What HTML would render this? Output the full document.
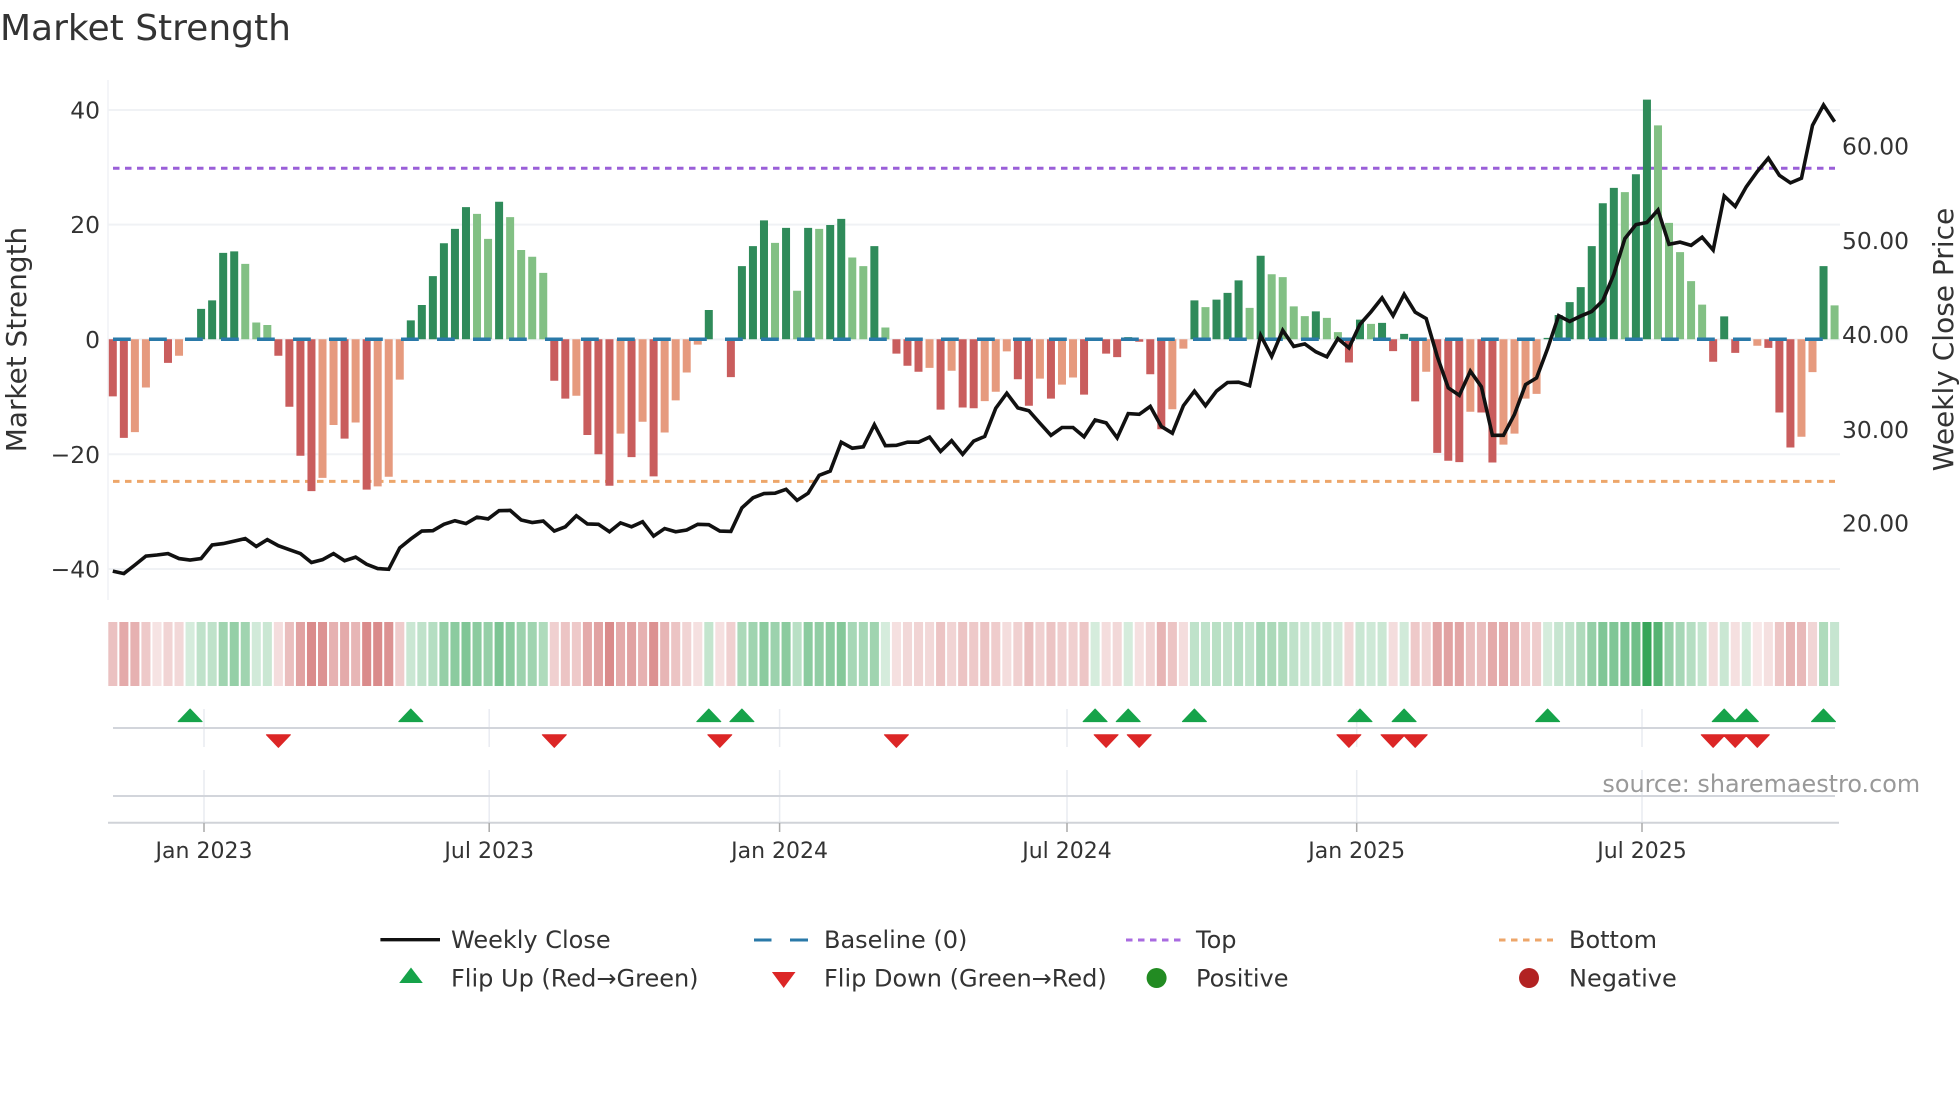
<!DOCTYPE html>
<html lang="en"><head><meta charset="utf-8"><title>Market Strength</title>
<style>
html,body{margin:0;padding:0;background:#fff}
svg{display:block}
text{font-family:"DejaVu Sans","Liberation Sans",sans-serif;fill:#333}
.t{font-size:23.4px}.x{font-size:22px}.l{font-size:24px}
.nz{vector-effect:non-scaling-stroke;fill:none}
#r rect,#g rect{width:.82px;height:1px}
#r rect{fill:rgb(205,100,100)}#g rect{fill:rgb(44,160,80)}
</style></head><body>
<svg width="1960" height="1102" viewBox="0 0 1960 1102" xmlns="http://www.w3.org/2000/svg">
<rect width="1960" height="1102" fill="#fff"/>
<text x="0" y="40" style="font-size:36px">Market Strength</text>
<path d="M108 80V600" stroke="#f0f2f5" stroke-width="1.5"/>
<path d="M108 110H1840M108 224.6H1840M108 339.4H1840M108 454.3H1840M108 569H1840" stroke="#f0f2f5" stroke-width="2"/>
<path d="M113 168.2H1835" stroke="#9a5fd8" stroke-width="3" stroke-dasharray="6.5 5.5"/>
<path d="M113 481.4H1835" stroke="#eda66a" stroke-width="3" stroke-dasharray="6.5 5.5"/>
<g transform="translate(112.8,60) scale(11.037,0.357143)">
<path class="nz" stroke="#c95d5d" stroke-width="8" d="M0 782V942M1 782V1058M5 782V848M15 782V828M16 782V971M17 782V1108M18 782V1207M21 782V1060M23 782V1203M40 782V898M41 782V948M43 782V1050M44 782V1104M45 782V1192M47 782V1112M49 782V1166M56 782V888M71 782V822M72 782V856M73 782V873M75 782V979M77 782V973M78 782V975M82 782V894M83 782V968M85 782V948M88 782V937M90 782V822M91 782V832M93 782V789M94 782V880M95 782V1034M112 782V847M116 782V815M118 782V956M120 782V1100M121 782V1122M122 782V1126M124 782V987M125 782V1127M145 782V845M147 782V820M150 782V806M151 782V987M152 782V1085"/>
<path class="nz" stroke="#e69a7e" stroke-width="8" d="M2 782V1042M3 782V917M6 782V828M19 782V1170M20 782V1022M22 782V1015M24 782V1194M25 782V1167M26 782V895M42 782V940M46 782V1046M48 782V1013M50 782V1043M51 782V953M52 782V875M53 782V797M74 782V862M76 782V870M79 782V955M80 782V929M81 782V816M84 782V892M86 782V909M87 782V889M96 782V978M97 782V808M119 782V873M123 782V985M126 782V1077M127 782V1046M128 782V948M129 782V935M149 782V800M153 782V1055M154 782V874"/>
<path class="nz" stroke="#2f8b5a" stroke-width="8" d="M8 782V697M9 782V673M10 782V540M11 782V536M27 782V729M28 782V686M29 782V605M30 782V513M31 782V473M32 782V412M35 782V397M54 782V700M57 782V577M58 782V521M59 782V449M61 782V470M63 782V470M65 782V462M66 782V445M69 782V521M92 782V776M98 782V673M100 782V671M101 782V652M102 782V617M104 782V548M109 782V704M113 782V727M115 782V736M117 782V767M130 782V778M131 782V714M132 782V678M133 782V636M134 782V521M135 782V401M136 782V358M138 782V320M139 782V111M146 782V718M148 782V780M155 782V577"/>
<path class="nz" stroke="#82c084" stroke-width="8" d="M12 782V571M13 782V735M14 782V742M33 782V431M34 782V501M36 782V440M37 782V532M38 782V551M39 782V596M60 782V512M62 782V646M64 782V473M67 782V553M68 782V577M70 782V749M99 782V692M103 782V694M105 782V600M106 782V608M107 782V690M108 782V717M110 782V722M111 782V762M114 782V739M137 782V370M140 782V183M141 782V456M142 782V538M143 782V619M144 782V685M156 782V687"/>
</g>
<path d="M113 339.2H1835" stroke="#2a79a8" stroke-width="3.5" stroke-dasharray="17.8 18.2"/>
<g transform="translate(112.8,60) scale(11.037,0.357143)">
<polyline class="nz" stroke="#111" stroke-width="3.6" stroke-linejoin="miter" points="0,1431 1,1438 2,1414 3,1389 4,1386 5,1382 6,1396 7,1400 8,1396 9,1358 10,1354 11,1347 12,1340 13,1362 14,1343 15,1360 16,1371 17,1382 18,1407 19,1399 20,1382 21,1402 22,1392 23,1412 24,1424 25,1426 26,1366 27,1341 28,1319 29,1318 30,1300 31,1290 32,1298 33,1280 34,1285 35,1262 36,1261 37,1288 38,1295 39,1291 40,1319 41,1307 42,1276 43,1299 44,1300 45,1321 46,1296 47,1307 48,1293 49,1333 50,1312 51,1321 52,1316 53,1300 54,1301 55,1319 56,1320 57,1254 58,1226 59,1214 60,1213 61,1202 62,1233 63,1213 64,1163 65,1151 66,1070 67,1087 68,1083 69,1021 70,1080 71,1079 72,1070 73,1070 74,1056 75,1096 76,1066 77,1104 78,1067 79,1054 80,975 81,933 82,974 83,982 84,1017 85,1051 86,1029 87,1029 88,1055 89,1008 90,1016 91,1058 92,990 93,992 94,970 95,1026 96,1045 97,968 98,927 99,968 100,927 101,903 102,902 103,912 104,771 105,830 106,757 107,802 108,795 109,817 110,831 111,780 112,806 113,740 114,705 115,666 116,716 117,656 118,706 119,724 120,830 121,918 122,939 123,871 124,915 125,1051 126,1051 127,992 128,909 129,890 130,808 131,716 132,732 133,717 134,704 135,674 136,600 137,500 138,461 139,455 140,420 141,516 142,510 143,519 144,496 145,532 146,381 147,410 148,355 149,312 150,275 151,323 152,344 153,331 154,183 155,126 156,173"/>
</g>
<text class="t" x="100" y="118.5" text-anchor="end">40</text>
<text class="t" x="100" y="233" text-anchor="end">20</text>
<text class="t" x="100" y="348" text-anchor="end">0</text>
<text class="t" x="100" y="463" text-anchor="end">−20</text>
<text class="t" x="100" y="577.5" text-anchor="end">−40</text>
<text class="t" x="1842" y="154.5">60.00</text>
<text class="t" x="1842" y="249">50.00</text>
<text class="t" x="1842" y="343">40.00</text>
<text class="t" x="1842" y="437.8">30.00</text>
<text class="t" x="1842" y="531.7">20.00</text>
<text transform="translate(26,339.5) rotate(-90)" text-anchor="middle" style="font-size:27.9px">Market Strength</text>
<text transform="translate(1953,339.5) rotate(-90)" text-anchor="middle" style="font-size:28px">Weekly Close Price</text>
<g transform="translate(108.3,622) scale(11.037,64)">
<g id="r"><rect x="0" opacity=".4"/><rect x="1" opacity=".55"/><rect x="2" opacity=".5"/><rect x="3" opacity=".35"/><rect x="4" opacity=".18"/><rect x="5" opacity=".28"/><rect x="6" opacity=".25"/><rect x="15" opacity=".22"/><rect x="16" opacity=".42"/><rect x="17" opacity=".6"/><rect x="18" opacity=".75"/><rect x="19" opacity=".7"/><rect x="20" opacity=".5"/><rect x="21" opacity=".55"/><rect x="22" opacity=".47"/><rect x="23" opacity=".75"/><rect x="24" opacity=".75"/><rect x="25" opacity=".7"/><rect x="26" opacity=".33"/><rect x="40" opacity=".3"/><rect x="41" opacity=".38"/><rect x="42" opacity=".35"/><rect x="43" opacity=".55"/><rect x="44" opacity=".6"/><rect x="45" opacity=".75"/><rect x="46" opacity=".55"/><rect x="47" opacity=".6"/><rect x="48" opacity=".5"/><rect x="49" opacity=".7"/><rect x="50" opacity=".48"/><rect x="51" opacity=".38"/><rect x="52" opacity=".28"/><rect x="53" opacity=".2"/><rect x="55" opacity=".2"/><rect x="56" opacity=".3"/><rect x="71" opacity=".2"/><rect x="72" opacity=".25"/><rect x="73" opacity=".28"/><rect x="74" opacity=".25"/><rect x="75" opacity=".38"/><rect x="76" opacity=".28"/><rect x="77" opacity=".38"/><rect x="78" opacity=".35"/><rect x="79" opacity=".38"/><rect x="80" opacity=".33"/><rect x="81" opacity=".22"/><rect x="82" opacity=".3"/><rect x="83" opacity=".42"/><rect x="84" opacity=".3"/><rect x="85" opacity=".38"/><rect x="86" opacity=".32"/><rect x="87" opacity=".3"/><rect x="88" opacity=".37"/><rect x="90" opacity=".22"/><rect x="91" opacity=".25"/><rect x="93" opacity=".2"/><rect x="94" opacity=".28"/><rect x="95" opacity=".48"/><rect x="96" opacity=".38"/><rect x="97" opacity=".22"/><rect x="112" opacity=".25"/><rect x="116" opacity=".22"/><rect x="118" opacity=".35"/><rect x="119" opacity=".28"/><rect x="120" opacity=".58"/><rect x="121" opacity=".6"/><rect x="122" opacity=".58"/><rect x="123" opacity=".42"/><rect x="124" opacity=".42"/><rect x="125" opacity=".55"/><rect x="126" opacity=".55"/><rect x="127" opacity=".48"/><rect x="128" opacity=".33"/><rect x="129" opacity=".32"/><rect x="145" opacity=".22"/><rect x="147" opacity=".2"/><rect x="149" opacity=".15"/><rect x="150" opacity=".2"/><rect x="151" opacity=".37"/><rect x="152" opacity=".48"/><rect x="153" opacity=".45"/><rect x="154" opacity=".27"/></g>
<g id="g"><rect x="7" opacity=".2"/><rect x="8" opacity=".3"/><rect x="9" opacity=".3"/><rect x="10" opacity=".45"/><rect x="11" opacity=".5"/><rect x="12" opacity=".45"/><rect x="13" opacity=".22"/><rect x="14" opacity=".25"/><rect x="27" opacity=".25"/><rect x="28" opacity=".3"/><rect x="29" opacity=".35"/><rect x="30" opacity=".5"/><rect x="31" opacity=".55"/><rect x="32" opacity=".6"/><rect x="33" opacity=".55"/><rect x="34" opacity=".5"/><rect x="35" opacity=".62"/><rect x="36" opacity=".55"/><rect x="37" opacity=".47"/><rect x="38" opacity=".45"/><rect x="39" opacity=".38"/><rect x="54" opacity=".28"/><rect x="57" opacity=".4"/><rect x="58" opacity=".45"/><rect x="59" opacity=".55"/><rect x="60" opacity=".47"/><rect x="61" opacity=".55"/><rect x="62" opacity=".33"/><rect x="63" opacity=".55"/><rect x="64" opacity=".52"/><rect x="65" opacity=".55"/><rect x="66" opacity=".58"/><rect x="67" opacity=".42"/><rect x="68" opacity=".42"/><rect x="69" opacity=".45"/><rect x="70" opacity=".2"/><rect x="89" opacity=".2"/><rect x="92" opacity=".2"/><rect x="98" opacity=".3"/><rect x="99" opacity=".3"/><rect x="100" opacity=".33"/><rect x="101" opacity=".3"/><rect x="102" opacity=".35"/><rect x="103" opacity=".3"/><rect x="104" opacity=".42"/><rect x="105" opacity=".4"/><rect x="106" opacity=".38"/><rect x="107" opacity=".3"/><rect x="108" opacity=".25"/><rect x="109" opacity=".25"/><rect x="110" opacity=".25"/><rect x="111" opacity=".22"/><rect x="113" opacity=".25"/><rect x="114" opacity=".23"/><rect x="115" opacity=".25"/><rect x="117" opacity=".22"/><rect x="130" opacity=".2"/><rect x="131" opacity=".27"/><rect x="132" opacity=".3"/><rect x="133" opacity=".38"/><rect x="134" opacity=".5"/><rect x="135" opacity=".6"/><rect x="136" opacity=".6"/><rect x="137" opacity=".62"/><rect x="138" opacity=".68"/><rect x="139" opacity=".95"/><rect x="140" opacity=".8"/><rect x="141" opacity=".5"/><rect x="142" opacity=".42"/><rect x="143" opacity=".35"/><rect x="144" opacity=".28"/><rect x="146" opacity=".25"/><rect x="148" opacity=".2"/><rect x="155" opacity=".38"/><rect x="156" opacity=".27"/></g>
</g>
<path d="M204 709V747M489.2 709V747M779.6 709V747M1067 709V747M1356.7 709V747M1642 709V747M204 770V822M489.2 770V822M779.6 770V822M1067 770V822M1356.7 770V822M1642 770V822" stroke="#e9ecf1" stroke-width="1.5"/>
<path d="M113 728H1835M113 796H1835" stroke="#d2d5db" stroke-width="2"/>
<path d="M108 822.8H1839" stroke="#d0d3d8" stroke-width="2"/>
<path d="M204 823V832M489.2 823V832M779.6 823V832M1067 823V832M1356.7 823V832M1642 823V832" stroke="#aaa" stroke-width="1.5"/>
<path fill="#16a34a" stroke="#16a34a" stroke-width="1" stroke-linejoin="round" d="M178.1 721.6l12-12.6 12 12.6zM398.8 721.6l12-12.6 12 12.6zM696.8 721.6l12-12.6 12 12.6zM729.9 721.6l12-12.6 12 12.6zM1083.1 721.6l12-12.6 12 12.6zM1116.2 721.6l12-12.6 12 12.6zM1182.4 721.6l12-12.6 12 12.6zM1348 721.6l12-12.6 12 12.6zM1392.1 721.6l12-12.6 12 12.6zM1535.6 721.6l12-12.6 12 12.6zM1712.2 721.6l12-12.6 12 12.6zM1734.3 721.6l12-12.6 12 12.6zM1811.5 721.6l12-12.6 12 12.6z"/>
<path fill="#dc2626" stroke="#dc2626" stroke-width="1" stroke-linejoin="round" d="M266.4 734.8h24l-12 12.6zM542.3 734.8h24l-12 12.6zM707.8 734.8h24l-12 12.6zM884.4 734.8h24l-12 12.6zM1094.1 734.8h24l-12 12.6zM1127.2 734.8h24l-12 12.6zM1336.9 734.8h24l-12 12.6zM1381 734.8h24l-12 12.6zM1403.2 734.8h24l-12 12.6zM1701.2 734.8h24l-12 12.6zM1723.2 734.8h24l-12 12.6zM1745.3 734.8h24l-12 12.6z"/>
<text class="x" x="204" y="858" text-anchor="middle">Jan 2023</text>
<text class="x" x="489.2" y="858" text-anchor="middle">Jul 2023</text>
<text class="x" x="779.6" y="858" text-anchor="middle">Jan 2024</text>
<text class="x" x="1067" y="858" text-anchor="middle">Jul 2024</text>
<text class="x" x="1356.7" y="858" text-anchor="middle">Jan 2025</text>
<text class="x" x="1642" y="858" text-anchor="middle">Jul 2025</text>
<text x="1602.4" y="792" style="font-size:23.9px;fill:#999">source: sharemaestro.com</text>
<path d="M380.4 939.7H440" stroke="#111" stroke-width="3.4"/>
<path d="M754 940H771.5M790 940H808" stroke="#2a79a8" stroke-width="3"/>
<path d="M1126 940H1181" stroke="#a96be0" stroke-width="3" stroke-dasharray="6.5 5.5"/>
<path d="M1499 940H1553" stroke="#eda66a" stroke-width="3" stroke-dasharray="6.5 5.5"/>
<path d="M399.2 983l11.8-15.5 11.8 15.5z" fill="#16a34a"/>
<path d="M771.9 972h23.6l-11.8 16z" fill="#dc2626"/>
<circle cx="1156.6" cy="978" r="10" fill="#228b22"/>
<circle cx="1529" cy="978" r="10" fill="#b22222"/>
<text class="l" x="451" y="948">Weekly Close</text>
<text class="l" x="824" y="948">Baseline (0)</text>
<text class="l" x="1196" y="948">Top</text>
<text class="l" x="1569" y="948">Bottom</text>
<text class="l" x="451" y="986.3">Flip Up (Red→Green)</text>
<text class="l" x="824" y="986.3">Flip Down (Green→Red)</text>
<text class="l" x="1196" y="986.3">Positive</text>
<text class="l" x="1569" y="986.3">Negative</text>
</svg>
</body></html>
